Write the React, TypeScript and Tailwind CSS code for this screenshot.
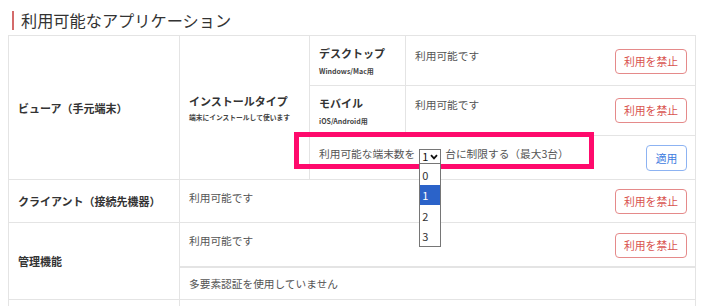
import React from "react";

const font = { fontFamily: '"Noto Sans CJK JP", "Noto Sans", sans-serif' };

function BanButton() {
  return (
    <button className="flex h-[25px] w-[72px] shrink-0 items-center justify-center rounded-[4px] border border-[#e58a8a] bg-white text-[10.8px] leading-none text-[#d9534f]">
      利用を禁止
    </button>
  );
}

function StatusCell({ text, textTop, btnTop, button = true }: { text: string; textTop: string; btnTop: string; button?: boolean }) {
  return (
    <div className="flex items-start justify-between pl-[9px] pr-[8px]">
      <span className={`${textTop} text-[10.7px] leading-[16px] text-[#555]`}>{text}</span>
      {button && (
        <div className={`${btnTop} flex`}>
          <BanButton />
        </div>
      )}
    </div>
  );
}

function CountSelect() {
  return (
    <div className="relative mt-[4px] h-[15px] w-[22px]">
      <div className="flex h-full w-full items-center justify-between border border-[#767676] bg-white pl-[2px] pr-[2px]">
        <span className="text-[11px] leading-none text-[#111]">1</span>
        <svg width="8" height="6" viewBox="0 0 8 6">
          <polyline points="1,1.2 4,4.4 7,1.2" fill="none" stroke="#111" strokeWidth="1.8" />
        </svg>
      </div>
      {/* native dropdown list */}
      <div className="absolute left-0 top-full z-20 w-[22px] border border-t-0 border-[#767676] bg-white text-[11px] text-[#333]">
        <div className="flex h-[21px] items-center pl-[2px]">0</div>
        <div className="flex h-[20px] items-center bg-[#2b63c9] pl-[2px] text-white">1</div>
        <div className="flex h-[21px] items-center pl-[2px]">2</div>
        <div className="flex h-[20px] items-center pl-[2px]">3</div>
      </div>
    </div>
  );
}

export default function App() {
  const td = "border border-[#e4e4e4] p-0";
  return (
    <div className="relative h-[306px] w-[704px] overflow-hidden bg-white" style={font}>
      <div className="ml-[12px] mt-[11px] mb-[5px] border-l-2 border-[#d46b6b] pl-[7px] text-[16.2px] leading-[19px] text-[#333]">
        利用可能なアプリケーション
      </div>

      <table className="ml-[8px] w-[687px] table-fixed border-collapse">
        <colgroup>
          <col className="w-[171px]" />
          <col className="w-[130px]" />
          <col className="w-[96px]" />
          <col className="w-[290px]" />
        </colgroup>
        <tbody>
          <tr className="h-[50px]">
            <td rowSpan={3} className={`${td} align-middle`}>
              <div className="pl-[9px] text-[11px] font-bold leading-[14px] text-[#333]">ビューア（手元端末）</div>
            </td>
            <td rowSpan={3} className={`${td} align-middle`}>
              <div className="pl-[9px]">
                <div className="text-[11px] font-bold leading-[14px] text-[#333]">インストールタイプ</div>
                <div className="mt-[4px] text-[6.75px] font-bold leading-[10px] text-[#444]">端末にインストールして使います</div>
              </div>
            </td>
            <td className={`${td} align-top`}>
              <div className="pl-[9px] pt-[10px]">
                <div className="text-[11px] font-bold leading-[14px] text-[#333]">デスクトップ</div>
                <div className="mt-[6px] text-[7px] font-bold leading-[10px] text-[#444]">Windows/Mac用</div>
              </div>
            </td>
            <td className={`${td} align-top`}>
              <StatusCell text="利用可能です" textTop="mt-[12px]" btnTop="mt-[13px]" />
            </td>
          </tr>
          <tr className="h-[50px]">
            <td className={`${td} align-top`}>
              <div className="pl-[9px] pt-[10px]">
                <div className="text-[11px] font-bold leading-[14px] text-[#333]">モバイル</div>
                <div className="mt-[6px] text-[7px] font-bold leading-[10px] text-[#444]">iOS/Android用</div>
              </div>
            </td>
            <td className={`${td} align-top`}>
              <StatusCell text="利用可能です" textTop="mt-[11px]" btnTop="mt-[12px]" />
            </td>
          </tr>
          <tr className="h-[44px]">
            <td colSpan={2} className={`${td} align-top`}>
              <div className="flex items-start justify-between pl-[9px] pr-[8px] pt-[9px]">
                <div className="flex items-start gap-[4px] text-[10.7px] leading-[18px] text-[#555]">
                  <span>利用可能な端末数を</span>
                  <CountSelect />
                  <span>台に制限する（最大3台）</span>
                </div>
                <button className="flex h-[26px] w-[41px] items-center justify-center rounded-[4px] border border-[#8db3f2] bg-white text-[10.8px] leading-none text-[#3d7be0]">
                  適用
                </button>
              </div>
            </td>
          </tr>
          <tr className="h-[43px]">
            <td className={`${td} align-middle`}>
              <div className="pl-[9px] text-[11px] font-bold leading-[14px] text-[#333]">クライアント（接続先機器）</div>
            </td>
            <td colSpan={3} className={`${td} align-top`}>
              <StatusCell text="利用可能です" textTop="mt-[10px]" btnTop="mt-[9px]" />
            </td>
          </tr>
          <tr className="h-[44px]">
            <td rowSpan={2} className={`${td} align-middle`}>
              <div className="pl-[9px] text-[11px] font-bold leading-[14px] text-[#333]">管理機能</div>
            </td>
            <td colSpan={3} className={`${td} align-top`}>
              <StatusCell text="利用可能です" textTop="mt-[10px]" btnTop="mt-[10px]" />
            </td>
          </tr>
          <tr className="h-[33px]">
            <td colSpan={3} className={`${td} border-t-2 align-top`}>
              <StatusCell text="多要素認証を使用していません" textTop="mt-[8px]" btnTop="" button={false} />
            </td>
          </tr>
          <tr className="h-[40px]">
            <td className={td}></td>
            <td colSpan={3} className={td}></td>
          </tr>
        </tbody>
      </table>

      {/* highlight annotation */}
      <div className="pointer-events-none absolute left-[294px] top-[132px] h-[37px] w-[300px] border-[5px] border-[#ff0a6c]" />
    </div>
  );
}
